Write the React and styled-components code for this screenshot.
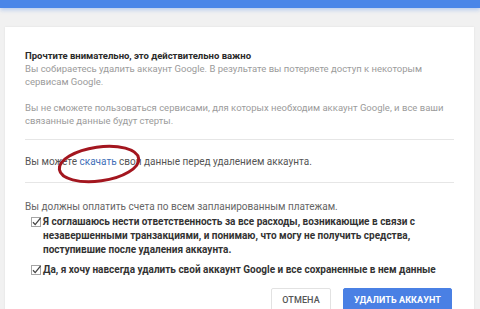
import styled, { createGlobalStyle } from "styled-components";

const Global = createGlobalStyle`
  html, body {
    margin: 0;
    padding: 0;
    background: #f1f1f1;
    font-family: Roboto, "Liberation Sans", Arial, sans-serif;
    overflow: hidden;
  }
`;

const Page = styled.div`
  width: 480px;
  height: 309px;
  overflow: hidden;
  background: #f1f1f1;
`;

const TopBar = styled.div`
  height: 8px;
  background: #4a86e8;
  box-shadow: 0 2px 4px rgba(74, 134, 232, 0.35);
`;

const Card = styled.div`
  position: relative;
  margin: 19px 6px 0 5px;
  background: #fff;
  padding: 22px 20px 0 20px;
  height: 300px;
  box-shadow: 0 0 2px rgba(0, 0, 0, 0.08);
`;

const Title = styled.div`
  font-size: 9.5px;
  font-weight: 700;
  line-height: 13px;
  color: #2a2a2a;
`;

const Muted = styled.p`
  margin: ${(p) => p.$top || 0}px 0 0;
  font-size: 9.5px;
  line-height: 13px;
  color: #9b9b9b;
`;

const Divider = styled.div`
  height: 1px;
  background: #e6e6e6;
  margin-top: ${(p) => p.$top}px;
`;

const Plain = styled.p`
  margin: ${(p) => p.$top}px 0 0;
  font-size: 10px;
  line-height: 13px;
  color: ${(p) => p.$color || "#555"};
`;

const Link = styled.span`
  color: #3f6fb8;
`;

const CheckRow = styled.label`
  display: flex;
  align-items: flex-start;
  gap: 2px;
  margin-top: ${(p) => p.$top}px;
  padding-left: 6px;
  font-size: 10px;
  font-weight: 700;
  line-height: 14px;
  color: #333;
`;

const Box = styled.span`
  flex: none;
  width: 10px;
  height: 14px;
  display: flex;
  align-items: center;
`;

const Actions = styled.div`
  display: flex;
  justify-content: flex-end;
  gap: 12px;
  margin-top: 11px;
  padding-right: 2px;
`;

const Button = styled.button`
  height: 24px;
  padding: 0;
  width: ${(p) => p.$w}px;
  font-family: Roboto, "Liberation Sans", Arial, sans-serif;
  font-size: 9px;
  font-weight: ${(p) => (p.$primary ? 700 : 500)};
  letter-spacing: 0.1px;
  text-transform: uppercase;
  border-radius: 2px;
  border: 1px solid ${(p) => (p.$primary ? "#4a80e4" : "#e2e2e2")};
  background: ${(p) => (p.$primary ? "#4a80e4" : "#fff")};
  color: ${(p) => (p.$primary ? "#fff" : "#555")};
`;

const Circle = styled.svg`
  position: absolute;
  left: 46px;
  top: 114px;
  pointer-events: none;
`;

const Check = () => (
  <svg width="10" height="10" viewBox="0 0 10 10">
    <rect x="0.5" y="0.5" width="9" height="9" fill="#fff" stroke="#a5a5a5" />
    <path d="M2 5.2 L4.2 7.6 L9.6 1" fill="none" stroke="#444" strokeWidth="1.3" />
  </svg>
);

export default function App() {
  return (
    <Page>
      <Global />
      <TopBar />
      <Card>
        <Title>Прочтите внимательно, это действительно важно</Title>
        <Muted>
          Вы собираетесь удалить аккаунт Google. В результате вы потеряете доступ к некоторым
          сервисам Google.
        </Muted>
        <Muted $top={13}>
          Вы не сможете пользоваться сервисами, для которых необходим аккаунт Google, и все ваши
          связанные данные будут стерты.
        </Muted>
        <Divider $top={12} />
        <Plain $top={15}>
          Вы можете <Link>скачать</Link> свои данные перед удалением аккаунта.
        </Plain>
        <Divider $top={14} />
        <Plain $top={17} $color="#666">
          Вы должны оплатить счета по всем запланированным платежам.
        </Plain>
        <CheckRow $top={2}>
          <Box><Check /></Box>
          <span>
            Я соглашаюсь нести ответственность за все расходы, возникающие в связи с
            незавершенными транзакциями, и понимаю, что могу не получить средства,
            поступившие после удаления аккаунта.
          </span>
        </CheckRow>
        <CheckRow $top={6}>
          <Box><Check /></Box>
          <span>Да, я хочу навсегда удалить свой аккаунт Google и все сохраненные в нем данные</span>
        </CheckRow>
        <Actions>
          <Button $w={60}>Отмена</Button>
          <Button $w={109} $primary>Удалить аккаунт</Button>
        </Actions>
        <Circle width="96" height="46" viewBox="0 0 96 46">
          <ellipse
            cx="48"
            cy="23"
            rx="40"
            ry="17"
            fill="none"
            stroke="#a3161f"
            strokeWidth="3"
            transform="rotate(-8 48 23)"
          />
        </Circle>
      </Card>
    </Page>
  );
}
